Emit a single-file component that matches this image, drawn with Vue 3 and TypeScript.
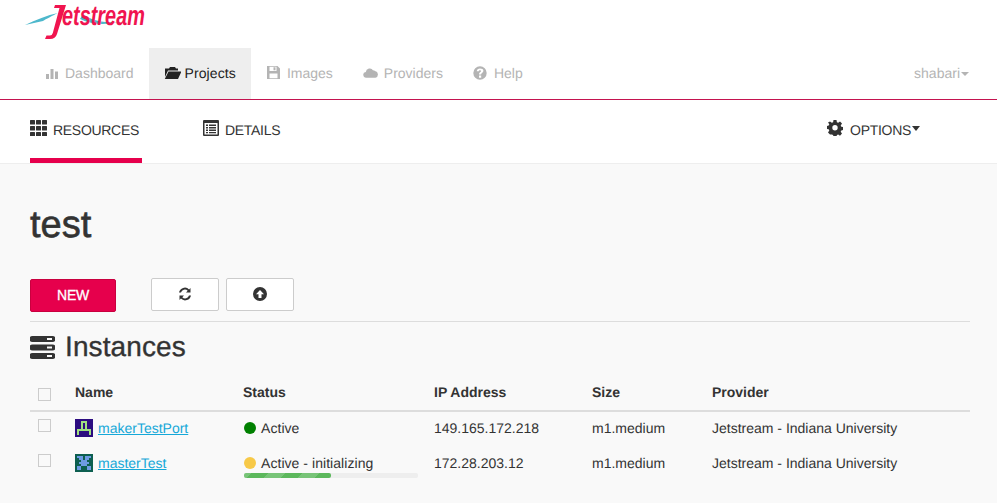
<script setup lang="ts">
interface Instance {
  name: string;
  status: string;
  dot: string;
  ip: string;
  size: string;
  provider: string;
  icon: string[];
  bg: string;
  fg: string;
  progress?: number;
}

const instances: Instance[] = [
  {
    name: "makerTestPort",
    status: "Active",
    dot: "#008000",
    ip: "149.165.172.218",
    size: "m1.medium",
    provider: "Jetstream - Indiana University",
    bg: "#2c0c80",
    fg: "#9fe080",
    icon: [".........", "...###...", "...#.#...", "...#.#...", "...#.#...", ".#######.", ".#.....#.", ".#.....#.", "........."]
  },
  {
    name: "masterTest",
    status: "Active - initializing",
    dot: "#f7c948",
    ip: "172.28.203.12",
    size: "m1.medium",
    provider: "Jetstream - Indiana University",
    bg: "#0d5f50",
    fg: "#6d9be4",
    icon: [".........", ".###.###.", "..##.##..", "...###...", "..#####..", "...###...", ".##...##.", ".##...##.", "........."],
    progress: 50
  }
];

function cells(rows: string[]) {
  const out: { x: number; y: number }[] = [];
  rows.forEach((row, y) => {
    row.split("").forEach((c, x) => {
      if (c === "#") out.push({ x, y });
    });
  });
  return out;
}

const grid = [0, 1, 2].flatMap((y) => [0, 1, 2].map((x) => ({ x: x * 6, y: y * 6 })));
</script>

<template>
  <div class="page">
    <header class="brand">
      <svg class="logo" width="160" height="46" viewBox="0 0 160 46">
        <path d="M25 25 C36 20 47 15 58 13 C52 16 46 19 43 21 C37 22 31 24 25 25Z" fill="#4db8cc" />
        <path d="M83 14 C92 21 104 23 118 22 C106 25 92 25 80 19Z" fill="#4db8cc" />
        <path d="M55 5 L66 5 L57 34 Q55.500 39 50 39 L45 39 L46.500 35.500 L50 35.500 Q52 35.500 52.800 33 L59.500 8 L54 8Z" fill="#f0144f" />
        <text class="logo-text" transform="translate(62 25) scale(.71 1)">etstream</text>
      </svg>
    </header>

    <nav class="topnav">
      <a class="nav-item">
        <svg class="ico dash" viewBox="0 0 14 14"><path d="M1 8h3v5H1zM5.500 3h3v10h-3zM10 5.500h3V13h-3z" /></svg>
        Dashboard
      </a>
      <a class="nav-item active">
        <svg class="ico folder" viewBox="0 0 17 14"><path d="M1 2.500h4l1-1.500h5l1 1.500h2V4.500H4L1 11zM4.500 5.500H17.500L14 13H.8z" /></svg>
        Projects
      </a>
      <a class="nav-item">
        <svg class="ico" viewBox="0 0 15 14"><path fill-rule="evenodd" d="M1 0h10.500L14 2.500V13H1zM3.500 .8v4.200h7V.8zM7.500 1.300h2v3h-2zM3.500 7.500v4.700h8V7.500z" /></svg>
        Images
      </a>
      <a class="nav-item">
        <svg class="ico cloud" viewBox="0 0 16 12"><path d="M3.500 11a3 3 0 0 1-.5-6A4.200 4.200 0 0 1 10.800 3.200a3 3 0 0 1 2 .6 3.700 3.700 0 0 1 .5 7.200z" /></svg>
        Providers
      </a>
      <a class="nav-item">
        <svg class="ico" viewBox="0 0 15 14"><path fill-rule="evenodd" d="M7 .3a6.700 6.700 0 1 1 0 13.400A6.700 6.700 0 0 1 7 .3zM6 9.500v2.200h2.200V9.500zM7 2.500c-1.900 0-3.100 1-3.200 2.700h2.100c0-.6.400-1 1.100-1s1.100.3 1.100.9c0 1-2.100 1.200-2.100 3.400h2.100c0-1.400 2.300-1.700 2.300-3.700C10.400 3.300 8.900 2.500 7 2.500z" /></svg>
        Help
      </a>
      <div class="user">shabari<span class="caret small"></span></div>
    </nav>

    <div class="subnav">
      <a class="tab selected">
        <svg class="tab-ico" width="17" height="16" viewBox="0 0 17 16"><rect v-for="c in grid" :key="`${c.x}-${c.y}`" :x="c.x" :y="c.y" width="5" height="4.600" rx=".5" /></svg>
        RESOURCES
      </a>
      <a class="tab details">
        <svg class="tab-ico" width="16" height="16" viewBox="0 0 16 16"><path fill-rule="evenodd" d="M1 0h14a1 1 0 0 1 1 1v14a1 1 0 0 1-1 1H1a1 1 0 0 1-1-1V1a1 1 0 0 1 1-1zM1.500 3v11.500h13V3zM3 4.500h2V6H3zM6 4.500h7V6H6zM3 7h2v1.500H3zM6 7h7v1.500H6zM3 9.500h2V11H3zM6 9.500h7V11H6zM3 12h2v1.300H3zM6 12h7v1.300H6z" /></svg>
        DETAILS
      </a>
      <a class="tab options">
        <svg class="tab-ico" width="16" height="16" viewBox="0 0 16 16"><path fill-rule="evenodd" d="M6.500 0h3l.4 2.200 1.300.6L13 1.500l2 2.100-1.300 1.800.6 1.300 1.700.4v3l-1.700.4-.6 1.300 1.300 1.800-2 2.100-1.800-1.300-1.300.6-.4 1.900h-3l-.4-1.900-1.300-.6L3 14.500l-2-2.100 1.300-1.800-.6-1.300L0 8.900v-3l1.700-.4.6-1.300L1 2.400l2-.9 1.800 1.300 1.300-.6zM8 5a2.700 2.700 0 1 0 0 5.400A2.700 2.700 0 0 0 8 5z" /></svg>
        <span>OPTIONS</span><span class="caret opt"></span>
      </a>
    </div>

    <main class="content">
      <h1>test</h1>

      <div class="actions">
        <button class="btn-new">NEW</button>
        <button class="btn-plain">
          <svg width="14" height="14" viewBox="0 0 14 14"><path d="M12.500 1v4.500H8l1.700-1.700A4 4 0 0 0 3 5.500H1A6 6 0 0 1 11.100 2.400zM1.500 13V8.500H6L4.300 10.200A4 4 0 0 0 11 8.500h2A6 6 0 0 1 2.900 11.600z" /></svg>
        </button>
        <button class="btn-plain">
          <svg width="14" height="14" viewBox="0 0 14 14"><path fill-rule="evenodd" d="M7 0a7 7 0 1 1 0 14A7 7 0 0 1 7 0zM7 3L3 7.200h2.500V11h3V7.200H11z" /></svg>
        </button>
      </div>

      <h2>
        <svg width="25" height="23" viewBox="0 0 25 23">
          <path fill-rule="evenodd" d="M2.500 0h20a2.500 2.500 0 0 1 0 6h-20a2.500 2.500 0 0 1 0-6zM17 2v2h5V2zM2.500 8.500h20a2.500 2.500 0 0 1 0 6h-20a2.500 2.500 0 0 1 0-6zM17 10.500v2h5v-2zM2.500 17h20a2.500 2.500 0 0 1 0 6h-20a2.500 2.500 0 0 1 0-6zM17 19v2h5v-2z" />
        </svg>
        Instances
      </h2>

      <table>
        <thead>
          <tr>
            <th class="check"><span class="box head"></span></th>
            <th class="col-name">Name</th>
            <th class="col-status">Status</th>
            <th class="col-ip">IP Address</th>
            <th class="col-size">Size</th>
            <th>Provider</th>
          </tr>
        </thead>
        <tbody>
          <tr v-for="item in instances" :key="item.name">
            <td class="check"><span class="box row"></span></td>
            <td>
              <div class="name-cell">
                <svg class="identicon" width="18" height="18" viewBox="0 0 9 9" shape-rendering="crispEdges">
                  <rect width="9" height="9" :fill="item.bg" />
                  <rect v-for="c in cells(item.icon)" :key="`${c.x}-${c.y}`" :x="c.x" :y="c.y" width="1" height="1" :fill="item.fg" />
                </svg>
                <a class="link">{{ item.name }}</a>
              </div>
            </td>
            <td class="status-cell">
              <div class="status"><span class="dot" :style="{ background: item.dot }"></span>{{ item.status }}</div>
              <div v-if="item.progress" class="progress">
                <div class="bar" :style="{ width: item.progress + '%' }"></div>
              </div>
            </td>
            <td>{{ item.ip }}</td>
            <td>{{ item.size }}</td>
            <td>{{ item.provider }}</td>
          </tr>
        </tbody>
      </table>
    </main>
  </div>
</template>

<style>
html,
body {
  margin: 0;
  background: #f9f9f9;
}
</style>

<style scoped>
.page {
  width: 997px;
  height: 503px;
  overflow: hidden;
  font-family: "Liberation Sans", Arial, sans-serif;
  font-size: 14px;
  color: #333;
  background: #f9f9f9;
  text-rendering: geometricPrecision;
}

.brand {
  height: 48px;
  background: #fff;
}

.logo {
  display: block;
}

.logo-text {
  font-family: "Liberation Sans", Arial, sans-serif;
  font-size: 28px;
  font-weight: 700;
  font-style: italic;
  fill: #f0144f;
}

.topnav {
  height: 51px;
  display: flex;
  padding-left: 30px;
  background: #fff;
  border-bottom: 1px solid #c4134f;
}

.nav-item {
  display: flex;
  align-items: center;
  gap: 6px;
  padding: 0 15px 2px;
  color: #b4b4b4;
}

.nav-item.active {
  background: #eee;
  color: #222;
  gap: 4px;
  letter-spacing: .1px;
}

.ico {
  width: 15px;
  height: 14px;
  fill: currentColor;
}

.ico.dash {
  width: 14px;
}

.ico.folder {
  width: 17px;
}

.ico.cloud {
  width: 15px;
}

.user {
  margin-left: auto;
  margin-right: 28px;
  align-self: center;
  padding-bottom: 2px;
  color: #b4b4b4;
}

.caret {
  display: inline-block;
  margin-left: 1px;
  vertical-align: 2px;
  border-top: 5px solid #333;
  border-left: 4px solid transparent;
  border-right: 4px solid transparent;
}

.caret.small {
  border-top: 4px solid #b4b4b4;
}

.caret.opt {
  margin: 4px 0 0 -6px;
}

.subnav {
  height: 63px;
  display: flex;
  background: #fff;
  border-bottom: 1px solid #eee;
}

.tab {
  display: flex;
  align-items: flex-start;
  padding-top: 22px;
  gap: 6px;
  color: #333;
  letter-spacing: -.3px;
  box-sizing: border-box;
}

.tab.selected {
  width: 112px;
  margin-left: 30px;
  border-bottom: 5px solid #e6004c;
}

.tab.details {
  margin-left: 61px;
}

.tab.options {
  margin-left: auto;
  margin-right: 77px;
  gap: 7px;
}

.tab-ico {
  fill: #333;
  margin-top: -2px;
}

.content {
  padding: 0 27px 0 30px;
}

h1 {
  margin: 0;
  padding-top: 41px;
  height: 73px;
  box-sizing: content-box;
  font-size: 38px;
  line-height: 40px;
  font-weight: 400;
  -webkit-text-stroke: .6px #333;
}

.actions {
  display: flex;
  align-items: flex-start;
  height: 43px;
  border-bottom: 1px solid #ddd;
}

.btn-new {
  width: 86px;
  height: 33px;
  margin-top: 1px;
  margin-right: 35px;
  padding: 0 0 2px;
  border: 1px solid #c9003f;
  border-radius: 2px;
  background: #e6004c;
  color: #fff;
  font: 14px "Liberation Sans", Arial, sans-serif;
  letter-spacing: -.3px;
  -webkit-text-stroke: .3px #fff;
}

.btn-plain {
  width: 68px;
  height: 33px;
  margin-right: 7px;
  padding: 0 0 2px;
  border: 1px solid #ccc;
  border-radius: 2px;
  background: #fff;
}

.btn-plain svg {
  fill: #333;
  display: block;
  margin: 0 auto;
}

h2 {
  display: flex;
  align-items: center;
  gap: 10px;
  margin: 0;
  height: 50px;
  font-size: 28px;
  font-weight: 400;
  letter-spacing: .1px;
  -webkit-text-stroke: .35px #333;
}

h2 svg {
  fill: #333;
}

table {
  width: 100%;
  margin-top: 2px;
  border-collapse: collapse;
  table-layout: fixed;
}

th {
  text-align: left;
  height: 36px;
  padding: 0;
  font-weight: 700;
  border-bottom: 2px solid #ddd;
}

td {
  height: 32px;
  padding: 0 0 3px;
  vertical-align: middle;
}

.check {
  width: 45px;
  padding-left: 8px;
  box-sizing: border-box;
}

.col-name {
  width: 168px;
}

.col-status {
  width: 191px;
}

.col-ip {
  width: 158px;
}

.col-size {
  width: 120px;
}

.box {
  display: block;
  width: 11px;
  height: 11px;
  border: 1px solid #ccc;
  background: #f9f9f9;
}

.box.head {
  margin-top: 5px;
}

.box.row {
  margin-bottom: 5px;
}

.name-cell {
  display: flex;
  align-items: center;
  gap: 5px;
}

.identicon {
  display: block;
}

.link {
  color: #16a8d8;
  text-decoration: underline;
}

.status-cell {
  position: relative;
}

.status {
  display: flex;
  align-items: center;
  gap: 5px;
  margin-left: 1px;
  letter-spacing: .05px;
}

.dot {
  width: 12px;
  height: 12px;
  border-radius: 50%;
}

.progress {
  position: absolute;
  left: 1px;
  top: 26px;
  width: 174px;
  height: 5px;
  border-radius: 2px;
  background: #eee;
}

.bar {
  height: 100%;
  border-radius: 2px;
  background: repeating-linear-gradient(-45deg, #5cb85c 0 12px, #78c478 12px 24px);
}
</style>
